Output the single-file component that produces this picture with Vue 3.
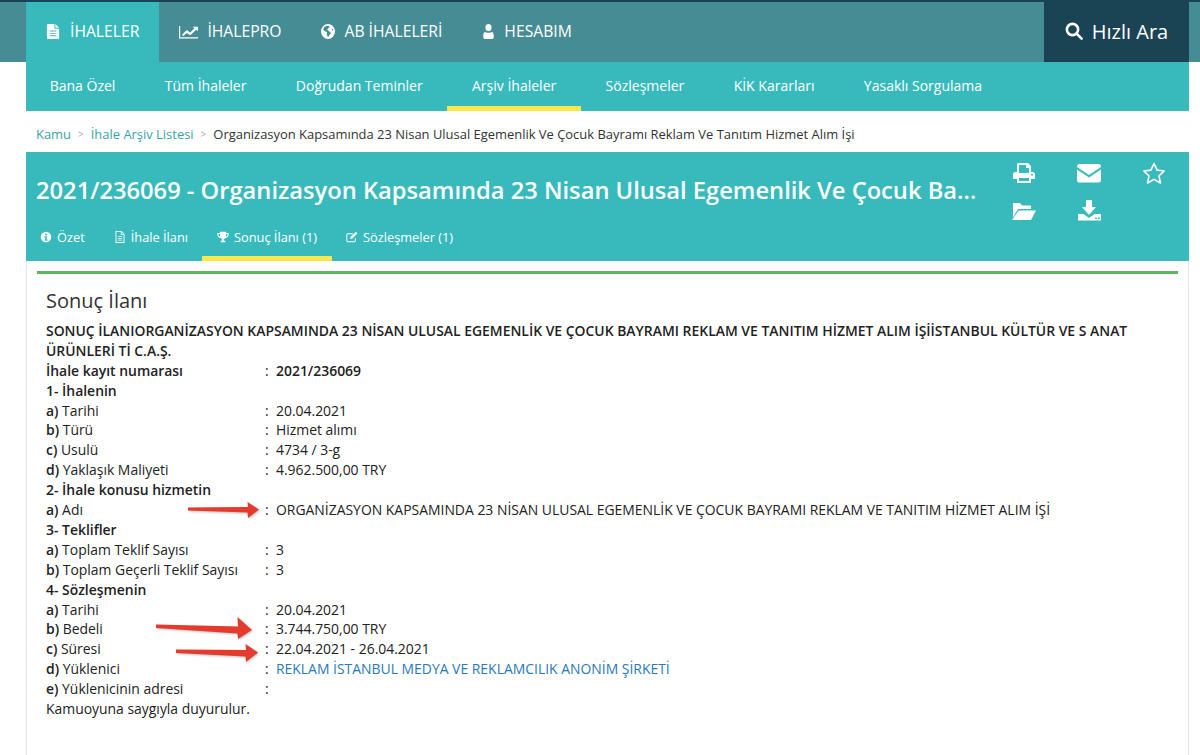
<template>
  <div class="sayfa">
    <header class="ust">
      <nav class="ust-menu">
        <a v-for="m in ustMenu" :key="m.ad" :class="['ust-link', { aktif: m.aktif }]">
          <svg class="ust-ikon" :style="{ width: m.en + 'px' }" viewBox="0 0 16 16" preserveAspectRatio="none" fill="#fff" fill-rule="evenodd"><path :d="ikonlar[m.ikon]" /></svg>
          {{ m.ad }}
        </a>
        <a class="hizli-ara">
          <svg class="ara-ikon" viewBox="0 0 18 18" fill="none" stroke="#fff" stroke-width="2.6">
            <circle cx="7.5" cy="7.5" r="5.6" />
            <path d="M11.6 11.6l5 5" stroke-linecap="round" />
          </svg>
          Hızlı Ara
        </a>
      </nav>
    </header>

    <main class="icerik">
      <nav class="alt-menu">
        <a v-for="m in altMenu" :key="m" :class="['alt-link', { aktif: m === 'Arşiv İhaleler' }]">{{ m }}</a>
      </nav>

      <div class="yol">
        <a>Kamu</a><span class="ayrac">&gt;</span><a>İhale Arşiv Listesi</a><span class="ayrac">&gt;</span>
        <span>Organizasyon Kapsamında 23 Nisan Ulusal Egemenlik Ve Çocuk Bayramı Reklam Ve Tanıtım Hizmet Alım İşi</span>
      </div>

      <section class="baslik-kutu">
        <div class="baslik-satir">
          <h1>2021/236069 - Organizasyon Kapsamında 23 Nisan Ulusal Egemenlik Ve Çocuk Bayramı Reklam Ve Tanıtım Hizmet Alım İşi</h1>
          <div class="araclar">
            <svg v-for="a in araclar" :key="a" class="arac" viewBox="0 0 24 22" fill="#fff" fill-rule="evenodd"><path :d="ikonlar[a]" /></svg>
            <svg class="arac yildiz" viewBox="0 0 24 22" fill="none" stroke="#fff" stroke-width="1.6" stroke-linejoin="round">
              <path d="M12 1.5l3.1 6.6 7.1.9-5.2 4.9 1.4 7.1-6.4-3.6-6.4 3.6 1.4-7.1L1.8 9l7.1-.9z" />
            </svg>
          </div>
        </div>
        <nav class="sekmeler">
          <a v-for="s in sekmeler" :key="s.ad" :class="['sekme', { aktif: s.aktif }]">
            <svg class="sekme-ikon" viewBox="0 0 16 16" fill="#fff" fill-rule="evenodd"><path :d="ikonlar[s.ikon]" /></svg>
            {{ s.ad }}
          </a>
        </nav>
      </section>

      <section class="panel">
        <div class="yesil"></div>
        <h2>Sonuç İlanı</h2>
        <div class="metin">
          <p class="kalin">SONUÇ İLANIORGANİZASYON KAPSAMINDA 23 NİSAN ULUSAL EGEMENLİK VE ÇOCUK BAYRAMI REKLAM VE TANITIM HİZMET ALIM İŞİİSTANBUL KÜLTÜR VE S ANAT ÜRÜNLERİ Tİ C.A.Ş.</p>
          <div v-for="(s, i) in satirlar" :key="i" class="satir">
            <template v-if="s.baslik"><b>{{ s.baslik }}</b></template>
            <template v-else>
              <span :class="['etiket', { kalin: s.kalin }]"><b v-if="s.harf">{{ s.harf }}</b> {{ s.etiket }}</span>
              <span class="iki-nokta">:</span>
              <span :class="{ kalin: s.kalin, mavi: s.link }">{{ s.deger }}</span>
            </template>
          </div>
          <p>Kamuoyuna saygıyla duyurulur.</p>
        </div>

        <svg class="ok ok-adi" width="72" height="18" viewBox="0 0 72 18">
          <path d="M0 6.500l60-.5L59.500 1 71 8.500 60 17l-.5-5.500L0 9.500z" />
        </svg>
        <svg class="ok ok-bedel" width="98" height="24" viewBox="0 0 98 24">
          <path d="M0 8.500l82 2-.5-9.500L96 14 82 23l-.5-5.500L0 12z" />
        </svg>
        <svg class="ok ok-sure" width="84" height="22" viewBox="0 0 84 22">
          <path d="M0 7.500l70 .5L69.500 2 82 10.500 70 20l-.5-5.500L0 11z" />
        </svg>
      </section>
    </main>
  </div>
</template>

<script setup>
// font-awesome benzeri ikonlar, elle cizildi
const ikonlar = {
  dosya: 'M2 0h7v5h5v10a1 1 0 0 1-1 1H2a1 1 0 0 1-1-1V1a1 1 0 0 1 1-1zM4 7v1h7V7zM4 9.500v1h7v-1zM4 12v1h7v-1zM10 0l4 4h-4z',
  grafik: 'M0 2h1v12h15v1.500H0zM2.500 11.500l4-5 3 2.500 3.500-4.500-1.500-1.500H16v4.500l-1.500-1.500-5 6-3-2.500-3 3.500z',
  dunya: 'M8 0a8 8 0 1 1 0 16A8 8 0 0 1 8 0zM4 3L2.500 6 5 8l2 .5L6.500 11l1.500 3 1.500-2 2-2.500L9 7.500 7 6l1.500-2 1.500-.5-1-1.500H6zM12 5l1.500 2.500L14 5.500z',
  kisi: 'M8 0a3.800 3.800 0 1 1 0 7.600A3.800 3.800 0 0 1 8 0zM3.500 8.500C5 9.500 11 9.500 12.500 8.500 14 9 14.500 11 14.500 13.500c0 1.500-1 2.500-2.500 2.500H4c-1.500 0-2.500-1-2.500-2.500C1.500 11 2 9 3.500 8.500z',
  bilgi: 'M8 1a7 7 0 1 1 0 14A7 7 0 0 1 8 1zM6.800 3.500v2.200h2.400V3.500zM6 7v1.500h.9v2.800H6V13h4v-1.700h-.9V7z',
  belge: 'M2 0h8l4 4v12H2zM3.200 1.200v13.600h9.600V5H9V1.200zM10 1.500V4h2.500zM5 7h6v1H5zM5 9.300h6v1H5zM5 11.600h6v1H5z',
  kupa: 'M4 1h8v1.500h3.500V5c0 2.500-2 4-4.500 4.500-.5.5-1.200 1-2 1.200V13h2v2H5v-2h2v-2.300c-.8-.2-1.500-.7-2-1.200C2.500 9 .5 7.500.5 5V2.500H4zM2 4v1c0 1.300 1 2.300 2.500 2.800C4.200 6.700 4 5.500 4 4zM12 4c0 1.500-.2 2.700-.5 3.800C13 7.300 14 6.300 14 5V4z',
  kalem: 'M2.500 3H9v1.200H2.500a.8.8 0 0 0-.8.8v8c0 .4.400.8.8.800h8.500c.4 0 .8-.4.800-.8V9.500H13V13c0 1.200-.9 2-2 2H2.500C1.400 15 .5 14.200.5 13V5c0-1.100.9-2 2-2zM13 1l2.300 2.300-6.800 6.800-3 .7.700-3z',
  yazici: 'M6 1h10l3 3v6h1.500a2.500 2.500 0 0 1 2.500 2.500V17h-4v4H5v-4H1v-4.500A2.500 2.500 0 0 1 3.500 10H5V2zM7 3v8h10V6h-3V3zM7 16v3h10v-3zM19 12v1.500h2V12z',
  zarf: 'M2.500 2h19A2.500 2.500 0 0 1 24 4.500v.5l-12 8L0 5v-.5A2.500 2.500 0 0 1 2.500 2zM0 7.500l12 8 12-8V18a2.500 2.500 0 0 1-2.500 2.500h-19A2.500 2.500 0 0 1 0 18z',
  klasor: 'M1 3h7l2 2.500h9V9H6L1 17.500zM6.500 10.500H24l-5 9.500H0z',
  indir: 'M9 0h6v7h4l-7 8-7-8h4zM1 14h5.500l5.500 4 5.500-4H24v6.500H1zM18 17.500v1.500h1.800v-1.500zM21 17.500v1.500h1.800v-1.500z',
}

const ustMenu = [
  { ad: 'İHALELER', ikon: 'dosya', en: 15, aktif: true },
  { ad: 'İHALEPRO', ikon: 'grafik', en: 19 },
  { ad: 'AB İHALELERİ', ikon: 'dunya', en: 14 },
  { ad: 'HESABIM', ikon: 'kisi', en: 13 },
]

const altMenu = ['Bana Özel', 'Tüm İhaleler', 'Doğrudan Teminler', 'Arşiv İhaleler', 'Sözleşmeler', 'KİK Kararları', 'Yasaklı Sorgulama']

const araclar = ['yazici', 'zarf', 'klasor', 'indir']

const sekmeler = [
  { ad: 'Özet', ikon: 'bilgi' },
  { ad: 'İhale İlanı', ikon: 'belge' },
  { ad: 'Sonuç İlanı (1)', ikon: 'kupa', aktif: true },
  { ad: 'Sözleşmeler (1)', ikon: 'kalem' },
]

const satirlar = [
  { etiket: 'İhale kayıt numarası', deger: '2021/236069', kalin: true },
  { baslik: '1- İhalenin' },
  { harf: 'a)', etiket: 'Tarihi', deger: '20.04.2021' },
  { harf: 'b)', etiket: 'Türü', deger: 'Hizmet alımı' },
  { harf: 'c)', etiket: 'Usulü', deger: '4734 / 3-g' },
  { harf: 'd)', etiket: 'Yaklaşık Maliyeti', deger: '4.962.500,00 TRY' },
  { baslik: '2- İhale konusu hizmetin' },
  { harf: 'a)', etiket: 'Adı', deger: 'ORGANİZASYON KAPSAMINDA 23 NİSAN ULUSAL EGEMENLİK VE ÇOCUK BAYRAMI REKLAM VE TANITIM HİZMET ALIM İŞİ' },
  { baslik: '3- Teklifler' },
  { harf: 'a)', etiket: 'Toplam Teklif Sayısı', deger: '3' },
  { harf: 'b)', etiket: 'Toplam Geçerli Teklif Sayısı', deger: '3' },
  { baslik: '4- Sözleşmenin' },
  { harf: 'a)', etiket: 'Tarihi', deger: '20.04.2021' },
  { harf: 'b)', etiket: 'Bedeli', deger: '3.744.750,00 TRY' },
  { harf: 'c)', etiket: 'Süresi', deger: '22.04.2021 - 26.04.2021' },
  { harf: 'd)', etiket: 'Yüklenici', deger: 'REKLAM İSTANBUL MEDYA VE REKLAMCILIK ANONİM ŞİRKETİ', link: true },
  { harf: 'e)', etiket: 'Yüklenicinin adresi', deger: '' },
]
</script>

<style>
html,
body {
  background: #fff;
}
</style>

<style scoped>
.sayfa {
  height: 755px;
  overflow: hidden;
  font-family: "Open Sans", "Noto Sans", sans-serif;
  color: #333;
}

.ust {
  height: 62px;
  box-sizing: border-box;
  border-top: 2px solid #1a4454;
  background: #468c94;
  padding: 0 11px 0 26px;
}

.ust-menu {
  display: flex;
  height: 60px;
}

.ust-link {
  display: flex;
  align-items: center;
  gap: 9px;
  padding: 0 20px 2px;
  color: #fff;
  font-size: 15.7px;
}

.ust-link.aktif {
  background: #38babd;
}

.ust-ikon {
  height: 15px;
}

.hizli-ara {
  margin-left: auto;
  width: 145px;
  box-sizing: border-box;
  display: flex;
  align-items: center;
  justify-content: center;
  gap: 9px;
  padding-bottom: 2px;
  background: #1a4454;
  color: #fff;
  font-size: 20px;
}

.ara-ikon {
  width: 18px;
  height: 18px;
}

.icerik {
  margin: 0 11px 0 26px;
}

.alt-menu {
  display: flex;
  height: 49px;
  background: #38babd;
}

.alt-link {
  display: flex;
  align-items: center;
  box-sizing: border-box;
  padding: 2px 24.7px 0;
  color: #fff;
  font-size: 14px;
  border-bottom: 5px solid transparent;
}

.alt-link:first-child {
  margin-left: -1px;
}

.alt-link.aktif {
  border-bottom-color: #fde74c;
}

.yol {
  display: flex;
  align-items: center;
  height: 41px;
  box-sizing: border-box;
  padding: 5px 0 0 10px;
  font-size: 12.95px;
  color: #333;
  white-space: nowrap;
}

.yol a {
  color: #3aa3a6;
}

.ayrac {
  margin: 0 7px;
  color: #aaa;
  font-size: 10px;
}

.baslik-kutu {
  height: 109px;
  background: #38babd;
  color: #fff;
}

.baslik-satir {
  display: flex;
  height: 68px;
  padding-left: 10px;
}

h1 {
  width: 947px;
  margin: 22px 0 0;
  font-size: 23.7px;
  line-height: 32px;
  height: 32px;
  font-weight: 600;
  white-space: nowrap;
  overflow: hidden;
  text-overflow: ellipsis;
}

.araclar {
  display: grid;
  grid-template-columns: repeat(3, 24px);
  column-gap: 41px;
  row-gap: 16px;
  margin: 10px 0 0 29px;
  align-content: start;
}

.arac {
  width: 24px;
  height: 22px;
}

.yildiz {
  grid-column: 3;
  grid-row: 1;
}

.sekmeler {
  display: flex;
  height: 41px;
}

.sekme {
  display: flex;
  align-items: center;
  gap: 5px;
  box-sizing: border-box;
  padding: 0 14.5px 2px;
  font-size: 12.8px;
  border-bottom: 5px solid transparent;
}

.sekme:first-child {
  padding-left: 14px;
}

.sekme.aktif {
  border-bottom-color: #fde74c;
}

.sekme-ikon {
  width: 12px;
  height: 12px;
}

.panel {
  position: relative;
  height: 494px;
  box-sizing: border-box;
  padding: 10px 10px 0;
  border-left: 1px solid #e4e4e4;
  border-right: 1px solid #e4e4e4;
}

.yesil {
  height: 3px;
  background: #5cb85c;
}

h2 {
  margin: 13px 0 6px 9px;
  font-size: 20px;
  line-height: 28px;
  font-weight: 400;
  color: #333;
}

.metin {
  margin-left: 9px;
  font-size: 13.93px;
  line-height: 19.9px;
  color: #222;
}

.metin p {
  margin: 0;
}

.metin b,
.kalin {
  font-weight: 600;
}

.satir {
  display: flex;
  height: 19.9px;
  white-space: nowrap;
}

.etiket {
  width: 219px;
}

.iki-nokta {
  width: 11px;
}

.mavi {
  color: #2a7ab8;
}

/* oklar metnin ustune biniyor */
.ok {
  position: absolute;
  fill: #e33b2e;
  filter: drop-shadow(1px 1px 1px rgba(0, 0, 0, 0.25));
}

.ok-adi {
  left: 161px;
  top: 240px;
}

.ok-bedel {
  left: 129px;
  top: 355px;
}

.ok-sure {
  left: 149px;
  top: 381px;
}
</style>
